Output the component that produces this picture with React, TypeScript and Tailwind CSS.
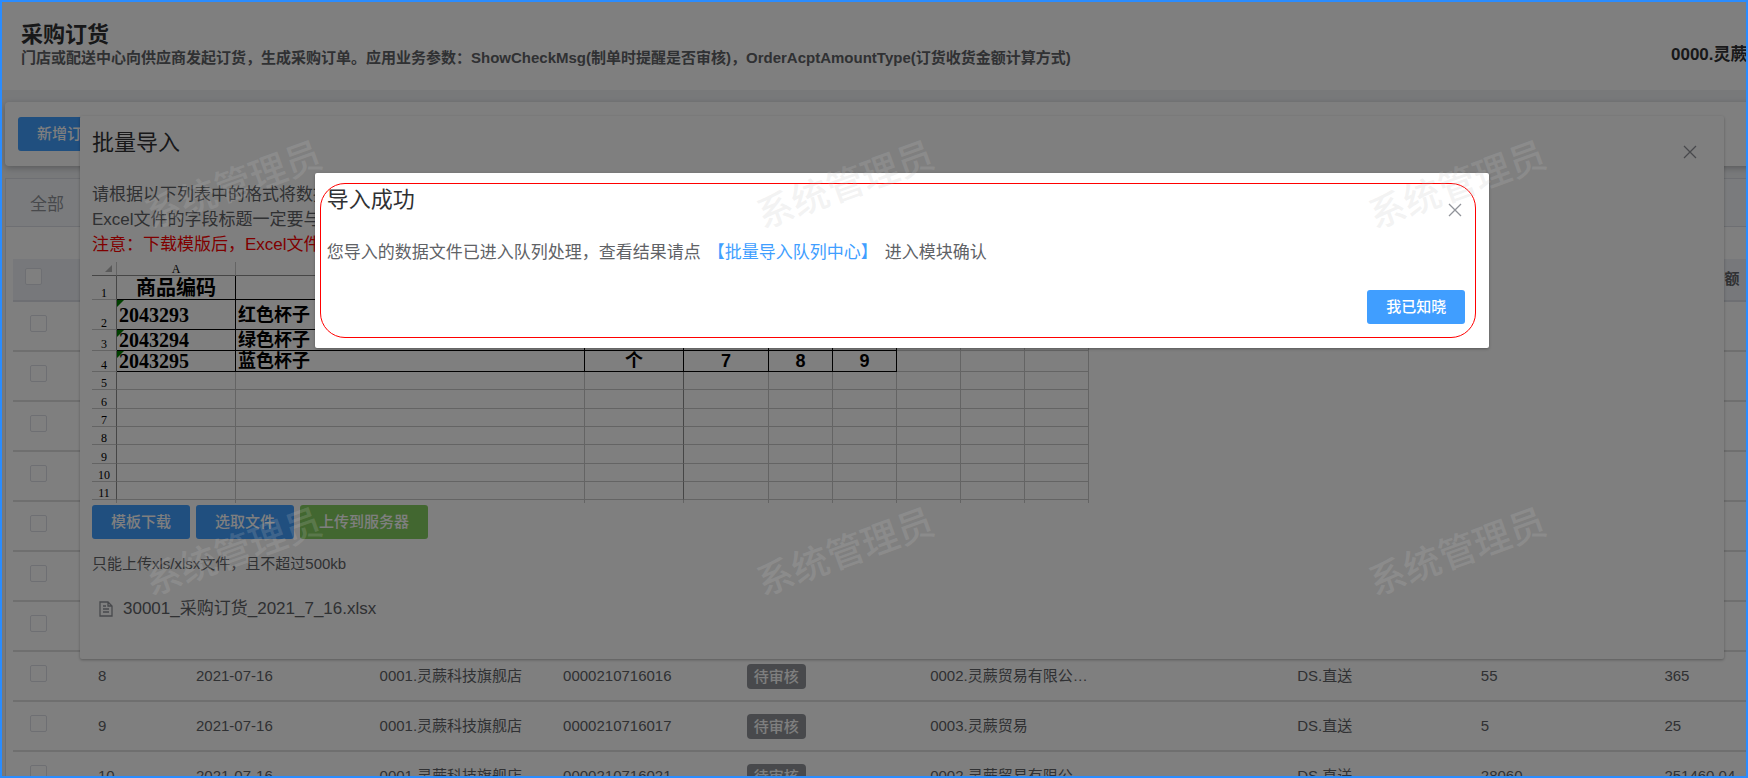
import clsx from "clsx";
import type { ReactNode } from "react";

interface Order {
  id: number;
  date: string;
  store: string;
  code: string;
  supplier: string;
  delivery: string;
  quantity: string;
  amount: string;
}

function makeOrder(
  id: number,
  code: string,
  supplier: string,
  quantity: string,
  amount: string,
): Order {
  return {
    id,
    date: "2021-07-16",
    store: "0001.灵蕨科技旗舰店",
    code,
    supplier,
    delivery: "DS.直送",
    quantity,
    amount,
  };
}

const ORDERS: Order[] = [
  makeOrder(1, "0000210716001", "0003.灵蕨贸易", "12", "60"),
  makeOrder(2, "0000210716003", "0003.灵蕨贸易", "8", "40"),
  makeOrder(3, "0000210716004", "0003.灵蕨贸易", "20", "100"),
  makeOrder(4, "0000210716007", "0003.灵蕨贸易", "6", "30"),
  makeOrder(5, "0000210716010", "0003.灵蕨贸易", "15", "75"),
  makeOrder(6, "0000210716012", "0003.灵蕨贸易", "9", "45"),
  makeOrder(7, "0000210716015", "0003.灵蕨贸易", "10", "50"),
  makeOrder(8, "0000210716016", "0002.灵蕨贸易有限公司总部", "55", "365"),
  makeOrder(9, "0000210716017", "0003.灵蕨贸易", "5", "25"),
  makeOrder(10, "0000210716021", "0002.灵蕨贸易有限公司总部", "28060", "251460.04"),
];

const ORDER_HEADS = [
  "序号",
  "订货日期",
  "门店",
  "单号",
  "状态",
  "供应商",
  "备注",
  "配送方式",
  "数量",
  "订单总金额",
];

const SHEET_HEADS = ["A", "B", "C", "D", "E", "F", "G", "H", "I"];

const SHEET_ROWS: { height: string; cells: string[] }[] = [
  { height: "h-[24px]", cells: ["商品编码", "商品名称", "单位", "数量", "单价", "金额"] },
  { height: "h-[30px]", cells: ["2043293", "红色杯子", "个", "1", "2", "3"] },
  { height: "h-[21px]", cells: ["2043294", "绿色杯子", "包", "4", "5", "6"] },
  { height: "h-[21px]", cells: ["2043295", "蓝色杯子", "个", "7", "8", "9"] },
  { height: "h-[18px]", cells: [] },
  { height: "h-[19px]", cells: [] },
  { height: "h-[18px]", cells: [] },
  { height: "h-[18px]", cells: [] },
  { height: "h-[19px]", cells: [] },
  { height: "h-[18px]", cells: [] },
  { height: "h-[18px]", cells: [] },
];

function Button({
  tone = "primary",
  children,
}: {
  tone?: "primary" | "success";
  children: ReactNode;
}) {
  return (
    <button
      type="button"
      className={clsx(
        "h-[34px] shrink-0 whitespace-nowrap rounded-[3px] px-[19px] text-[15px] font-medium text-white",
        tone === "primary" ? "bg-[#409eff]" : "bg-[#85ce61]",
      )}
    >
      {children}
    </button>
  );
}

function CloseButton({ label }: { label: string }) {
  return (
    <button type="button" aria-label={label} className="block text-[#909399]">
      <svg
        className="block"
        width="14"
        height="14"
        viewBox="0 0 14 14"
        fill="none"
        stroke="currentColor"
      >
        <path d="M1 1l12 12M13 1L1 13" strokeWidth="1.3" />
      </svg>
    </button>
  );
}

function Checkbox({ label }: { label: string }) {
  return (
    <input
      type="checkbox"
      aria-label={label}
      className="block size-[17px] appearance-none rounded-xs border border-[#dcdfe6] bg-white"
    />
  );
}

function PageHeader() {
  return (
    <header className="flex h-[90px] items-start justify-between bg-white pl-[21px] pr-5">
      <div className="pt-[21px]">
        <h1 className="text-[22px] leading-[27px] font-bold text-[#303133]">采购订货</h1>
        <p className="text-[15px] leading-5 font-bold text-[#606266]">
          门店或配送中心向供应商发起订货，生成采购订单。应用业务参数：ShowCheckMsg(制单时提醒是否审核)，OrderAcptAmountType(订货收货金额计算方式)
        </p>
      </div>
      <p className="w-[113px] overflow-hidden pt-[42px] text-[17px] leading-[26px] font-bold whitespace-nowrap text-[#303133]">
        0000.灵蕨科技
      </p>
    </header>
  );
}

function OrderTable() {
  return (
    <table className="w-[1825px] table-fixed border-separate border-spacing-0 text-left text-[15px] text-[#606266]">
      <colgroup>
        <col className="w-[75px]" />
        <col className="w-[98px]" />
        {ORDER_HEADS.slice(1).map((head) => (
          <col key={head} />
        ))}
      </colgroup>
      <thead>
        <tr className="h-[43px] bg-[#eef1f6]">
          <th className="border-b-2 border-[#dcdfe6] pb-1.5 pl-3">
            <Checkbox label="全选" />
          </th>
          {ORDER_HEADS.map((head) => (
            <th key={head} className="border-b-2 border-[#dcdfe6] px-2.5 py-0 font-bold">
              {head}
            </th>
          ))}
        </tr>
      </thead>
      <tbody>
        {ORDERS.map((order) => (
          <tr
            key={order.id}
            className="h-[50px] *:border-b-2 *:border-[#dedede] *:px-2.5 *:py-0"
          >
            <td>
              <div className="pb-1.5 pl-[7px]">
                <Checkbox label={`选择第${order.id}行`} />
              </div>
            </td>
            <td>{order.id}</td>
            <td>{order.date}</td>
            <td>{order.store}</td>
            <td>{order.code}</td>
            <td>
              <span className="inline-block h-[25px] rounded-sm bg-[#909399] px-[7px] leading-[25px] font-medium text-white">
                待审核
              </span>
            </td>
            <td className="truncate">{order.supplier}</td>
            <td />
            <td>{order.delivery}</td>
            <td>{order.quantity}</td>
            <td>{order.amount}</td>
          </tr>
        ))}
      </tbody>
    </table>
  );
}

function SheetPreview() {
  return (
    <table className="mt-[5px] w-[997px] table-fixed border-separate border-spacing-0 leading-none text-black">
      <colgroup>
        <col className="w-[25px]" />
        <col className="w-[119px]" />
        <col className="w-[349px]" />
        <col className="w-[99px]" />
        <col className="w-[85px]" />
        <col className="w-[64px]" span={5} />
      </colgroup>
      <thead>
        <tr className="h-[14px] font-['Liberation_Serif',serif] text-[12px] *:border-r *:border-b *:border-r-[#c8c8c8] *:border-b-[#8c8c8c] *:p-0 *:font-normal">
          <th>
            <svg className="mr-1 ml-auto" width="7" height="7" viewBox="0 0 7 7">
              <path d="M7 0v7H0z" fill="#b4b4b4" />
            </svg>
          </th>
          {SHEET_HEADS.map((head) => (
            <th key={head}>{head}</th>
          ))}
        </tr>
      </thead>
      <tbody>
        {SHEET_ROWS.map((row, rowIndex) => (
          <tr key={rowIndex} className={row.height}>
            <th className="border-r border-b border-r-[#8c8c8c] border-b-[#c8c8c8] p-0 align-bottom font-['Liberation_Serif',serif] text-[12px] font-normal">
              {rowIndex + 1}
            </th>
            {SHEET_HEADS.map((head, colIndex) => {
              const text = row.cells[colIndex];
              const isLeft = colIndex < 2 && rowIndex > 0;
              return (
                <td
                  key={head}
                  className={clsx(
                    "relative border-r border-b p-0 font-bold whitespace-nowrap",
                    text ? "border-black" : "border-[#c8c8c8]",
                    !text && colIndex === 2 && "border-r-[#8c8c8c]",
                    isLeft ? "pl-0.5 text-left" : "text-center",
                    rowIndex === 0 && "text-[20px]",
                    rowIndex > 0 && (colIndex === 0 ? "text-[20px]" : "text-[18px]"),
                    colIndex === 0 &&
                      "font-['Liberation_Serif','Noto_Sans_CJK_SC',sans-serif]",
                  )}
                >
                  {text && colIndex === 0 && rowIndex > 0 && (
                    <svg
                      className="absolute top-0 left-0"
                      width="7"
                      height="7"
                      viewBox="0 0 7 7"
                    >
                      <path d="M0 0h7L0 7z" fill="#008000" />
                    </svg>
                  )}
                  {text}
                </td>
              );
            })}
          </tr>
        ))}
        <tr className="h-[3px] *:border-r *:border-[#c8c8c8] *:p-0">
          <td />
          {SHEET_HEADS.map((head) => (
            <td key={head} />
          ))}
        </tr>
      </tbody>
    </table>
  );
}

function ImportDialog() {
  return (
    <section
      role="dialog"
      aria-label="批量导入"
      className="absolute inset-x-20 top-[116px] rounded-xs bg-white px-3 pt-3 pb-[38px] text-[#606266] shadow-[0_1px_3px_rgba(0,0,0,0.3)]"
    >
      <div className="flex h-[30px] justify-between pr-[15px]">
        <h2 className="text-[22px] leading-[30px] text-[#303133]">批量导入</h2>
        <div className="pt-[17px]">
          <CloseButton label="关闭批量导入" />
        </div>
      </div>
      <div className="mt-6 text-[17px] leading-[25px]">
        <p>请根据以下列表中的格式将数据整理到文件中</p>
        <p>Excel文件的字段标题一定要与模版保持一致</p>
        <p className="text-[#ff0000]">注意：下载模版后，Excel文件的格式请勿修改</p>
      </div>
      <SheetPreview />
      <div className="mt-0.5 flex gap-1.5">
        <Button>模板下载</Button>
        <Button>选取文件</Button>
        <Button tone="success">上传到服务器</Button>
      </div>
      <p className="mt-[15px] text-[15px] leading-5">只能上传xls/xlsx文件，且不超过500kb</p>
      <p className="mt-[22px] flex items-center gap-2.5 pl-[7px] text-[17px] leading-[25px]">
        <svg width="14" height="16" viewBox="0 0 14 16" fill="none" stroke="#909399">
          <path d="M1 1h8l4 4v10H1zM9 1v4h4M4 5h3M4 8h6M4 11h6" strokeWidth="1.3" />
        </svg>
        30001_采购订货_2021_7_16.xlsx
      </p>
    </section>
  );
}

function SuccessDialog() {
  return (
    <section
      role="dialog"
      aria-label="导入成功"
      className="relative mx-auto mt-[173px] w-[65.1%] rounded-xs bg-white pt-3 pr-6 pb-6 pl-3 shadow-[0_1px_3px_rgba(0,0,0,0.3)]"
    >
      <div className="flex h-[30px] justify-between pr-[3px]">
        <h2 className="text-[22px] leading-[30px] text-[#303133]">导入成功</h2>
        <div className="pt-[18px]">
          <CloseButton label="关闭" />
        </div>
      </div>
      <p className="mt-[25px] text-[17px] leading-[25px] text-[#606266]">
        您导入的数据文件已进入队列处理，查看结果请点
        <a href="#queue" className="mx-[7px] text-[#409eff]">
          【批量导入队列中心】
        </a>
        进入模块确认
      </p>
      <div className="mt-[25px] flex justify-end">
        <Button>我已知晓</Button>
      </div>
      {/* Highlight ring */}
      <div className="pointer-events-none absolute top-2.5 right-[13px] bottom-2.5 left-[5px] rounded-[25px] border border-[#ff0000]" />
    </section>
  );
}

function Watermark() {
  return (
    <div
      aria-hidden="true"
      className="pointer-events-none absolute top-0.5 -left-[73px] grid auto-rows-[367px] grid-cols-[repeat(3,612px)] place-items-center"
    >
      {Array.from({ length: 6 }, (_, i) => (
        <span
          key={i}
          className="-rotate-20 text-[37px] leading-none font-medium text-[#c2c2c2]/20"
        >
          系统管理员
        </span>
      ))}
    </div>
  );
}

export default function App() {
  return (
    <div className="relative h-screen overflow-hidden bg-[#f0f2f5] font-['Liberation_Sans','Noto_Sans_CJK_SC',sans-serif]">
      {/* The workspace runs a little past the right edge of the window */}
      <div className="relative h-full w-[calc(100%+56px)]">
        <PageHeader />
        <div className="pl-[5px]">
          <div className="mt-3 h-16 rounded-sm bg-white px-[13px] pt-[15px] shadow-[0_2px_6px_rgba(0,0,0,0.25)]">
            <Button>新增订货</Button>
          </div>
          <main className="mt-3 border border-[#dcdfe6] bg-white">
            <div className="h-12 border-b border-[#dcdfe6] bg-[#f5f7fa] pt-0.5 pl-6 text-[17px] leading-[48px] text-[#909399]">
              全部
            </div>
            <div className="pt-8 pl-[7px]">
              <OrderTable />
            </div>
          </main>
        </div>
        <ImportDialog />
        <div className="absolute inset-0 flex items-start bg-black/50">
          <SuccessDialog />
        </div>
      </div>
      <Watermark />
      <div className="pointer-events-none absolute inset-0 border-2 border-[#2a8cff]" />
    </div>
  );
}
